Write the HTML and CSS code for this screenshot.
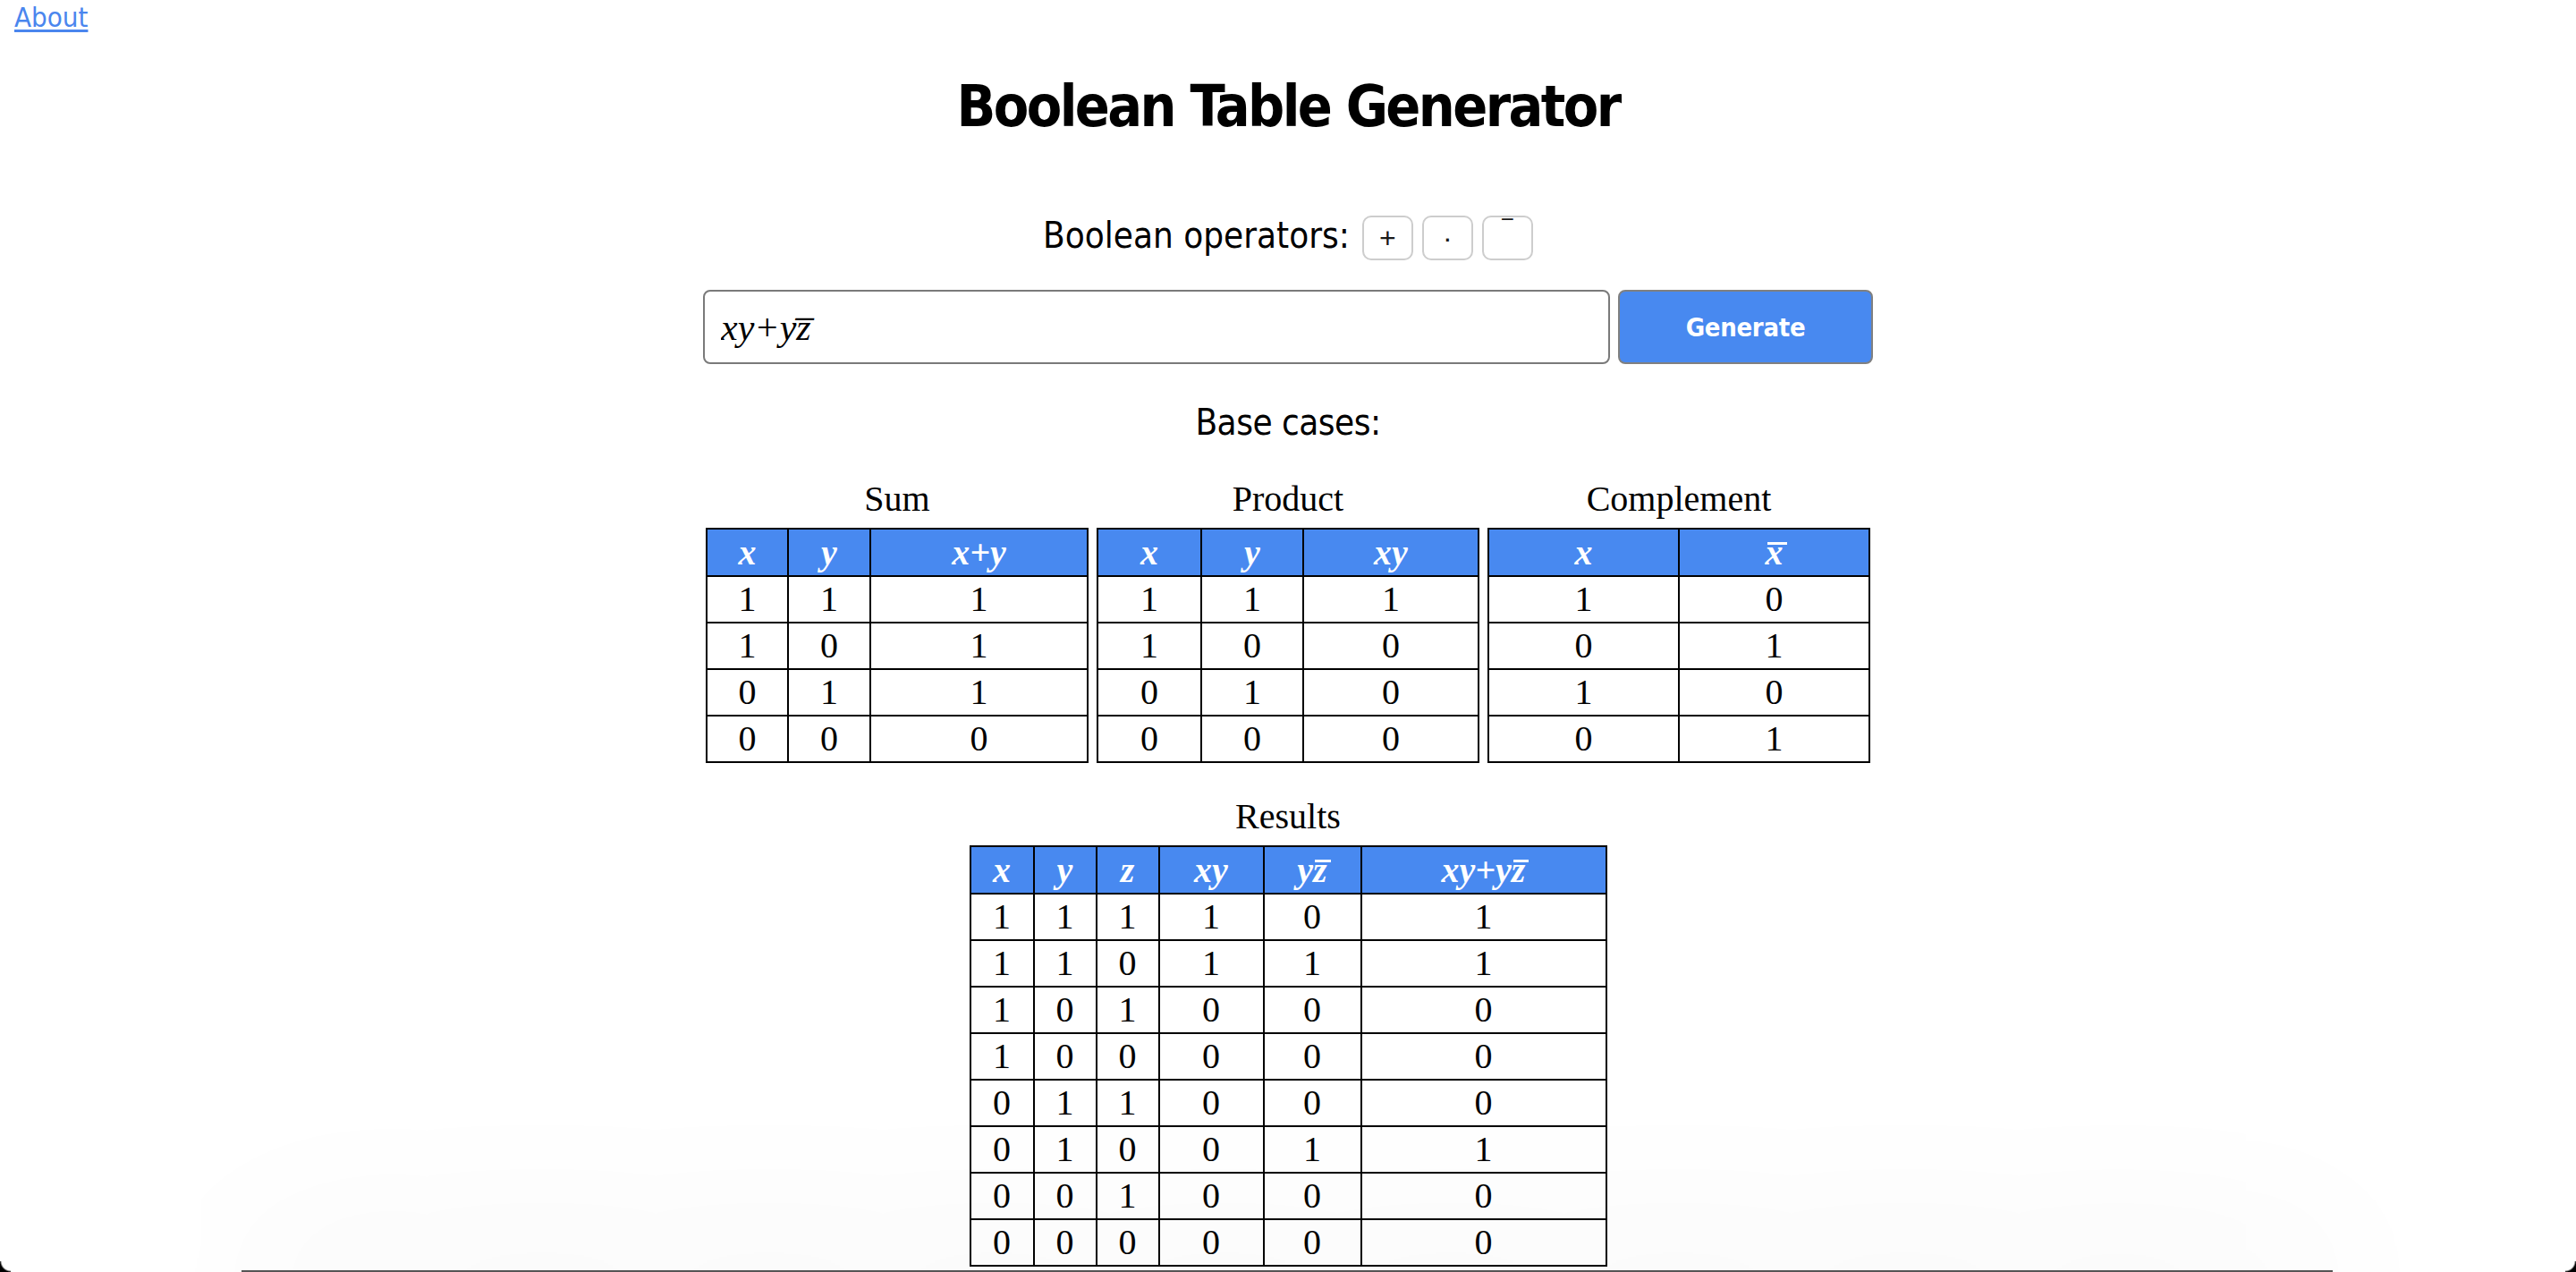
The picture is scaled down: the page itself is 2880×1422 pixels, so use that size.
FILE: index.html
```html
<!DOCTYPE html>
<html lang="en">
<head>
<meta charset="utf-8">
<title>Boolean Table Generator</title>
<link rel="stylesheet" href="styles.css">
</head>
<body>
<nav class="nav"><a class="about" href="#">About</a></nav>
<main class="main">
  <h1 class="title">Boolean Table Generator</h1>
  <div class="ops">
    <span class="ops-label">Boolean operators:</span>
    <button class="op" type="button">+</button>
    <button class="op" type="button">·</button>
    <button class="op op-bar" type="button">‾</button>
  </div>
  <form class="gen">
    <input class="expr" type="text" value="xy+yz̅">
    <button class="gen-btn" type="button">Generate</button>
  </form>
  <h2 class="subhead">Base cases:</h2>
  <div class="bases">
    <table class="tt tt-base">
      <caption>Sum</caption>
      <colgroup><col class="w91"><col class="w92"><col class="w243"></colgroup>
      <thead><tr><th>x</th><th>y</th><th>x+y</th></tr></thead>
      <tbody>
        <tr><td>1</td><td>1</td><td>1</td></tr>
        <tr><td>1</td><td>0</td><td>1</td></tr>
        <tr><td>0</td><td>1</td><td>1</td></tr>
        <tr><td>0</td><td>0</td><td>0</td></tr>
      </tbody>
    </table>
    <table class="tt tt-base">
      <caption>Product</caption>
      <colgroup><col class="w116"><col class="w114"><col class="w196"></colgroup>
      <thead><tr><th>x</th><th>y</th><th>xy</th></tr></thead>
      <tbody>
        <tr><td>1</td><td>1</td><td>1</td></tr>
        <tr><td>1</td><td>0</td><td>0</td></tr>
        <tr><td>0</td><td>1</td><td>0</td></tr>
        <tr><td>0</td><td>0</td><td>0</td></tr>
      </tbody>
    </table>
    <table class="tt tt-base">
      <caption>Complement</caption>
      <colgroup><col class="w213"><col class="w213"></colgroup>
      <thead><tr><th>x</th><th><span class="ov">x</span></th></tr></thead>
      <tbody>
        <tr><td>1</td><td>0</td></tr>
        <tr><td>0</td><td>1</td></tr>
        <tr><td>1</td><td>0</td></tr>
        <tr><td>0</td><td>1</td></tr>
      </tbody>
    </table>
  </div>
  <div class="results">
    <table class="tt tt-res">
      <caption>Results</caption>
      <colgroup><col class="w71"><col class="w70"><col class="w70"><col class="w117"><col class="w109"><col class="w274"></colgroup>
      <thead><tr><th>x</th><th>y</th><th>z</th><th>xy</th><th>y<span class="ov">z</span></th><th>xy+y<span class="ov">z</span></th></tr></thead>
      <tbody>
        <tr><td>1</td><td>1</td><td>1</td><td>1</td><td>0</td><td>1</td></tr>
        <tr><td>1</td><td>1</td><td>0</td><td>1</td><td>1</td><td>1</td></tr>
        <tr><td>1</td><td>0</td><td>1</td><td>0</td><td>0</td><td>0</td></tr>
        <tr><td>1</td><td>0</td><td>0</td><td>0</td><td>0</td><td>0</td></tr>
        <tr><td>0</td><td>1</td><td>1</td><td>0</td><td>0</td><td>0</td></tr>
        <tr><td>0</td><td>1</td><td>0</td><td>0</td><td>1</td><td>1</td></tr>
        <tr><td>0</td><td>0</td><td>1</td><td>0</td><td>0</td><td>0</td></tr>
        <tr><td>0</td><td>0</td><td>0</td><td>0</td><td>0</td><td>0</td></tr>
      </tbody>
    </table>
  </div>
</main>
<div class="dock-shadow"></div>
<div class="dock-line"></div>
<div class="corner corner-l"></div>
<div class="corner corner-r"></div>
</body>
</html>
```

FILE: styles.css
```css
html, body {
  margin: 0;
  padding: 0;
  background: #fff;
}
body {
  font-family: "DejaVu Sans Condensed", "DejaVu Sans", sans-serif;
  color: #000;
}
.nav {
  height: 38px;
  padding-left: 16px;
}
.about {
  font-size: 31px;
  line-height: 38px;
  color: #4a86ee;
  text-decoration: underline;
  text-decoration-thickness: 3px;
  text-underline-offset: 3px;
}
.title {
  margin: 44px 0 0;
  font-size: 64px;
  line-height: 74px;
  font-weight: bold;
  letter-spacing: -2.6px;
  text-align: center;
}
.ops {
  display: flex;
  justify-content: center;
  align-items: flex-start;
  margin-top: 84px;
}
.ops-label {
  font-size: 40px;
  line-height: 46px;
  margin-right: 14px;
}
.op {
  width: 57px;
  height: 50px;
  margin-top: 1px;
  margin-left: 10px;
  padding: 0;
  border: 2px solid #cdcdcd;
  border-radius: 10px;
  background: #fff;
  color: #1a1a1a;
  font-family: "Liberation Sans", sans-serif;
  font-size: 32px;
  line-height: 46px;
}
.op:first-of-type { margin-left: 0; }
.op-bar {
  line-height: 30px;
  display: flex;
  justify-content: center;
  align-items: flex-start;
}
.gen {
  display: flex;
  justify-content: center;
  gap: 9px;
  margin: 33px 0 0;
}
.expr {
  box-sizing: border-box;
  width: 1014px;
  height: 83px;
  border: 2px solid #7a7a7a;
  border-radius: 8px;
  padding: 0 18px;
  font-family: "Liberation Serif", serif;
  font-style: italic;
  font-size: 42px;
  color: #000;
  outline: none;
}
.gen-btn {
  box-sizing: border-box;
  width: 285px;
  height: 83px;
  border: 2px solid #808080;
  border-radius: 8px;
  background: #4889f0;
  color: #fff;
  font-family: "DejaVu Sans Condensed", "DejaVu Sans", sans-serif;
  font-weight: bold;
  font-size: 29px;
  letter-spacing: -0.3px;
}
.subhead {
  margin: 42px 0 0;
  font-size: 40px;
  line-height: 46px;
  font-weight: normal;
  letter-spacing: -0.5px;
  text-align: center;
}
.bases {
  display: flex;
  justify-content: center;
  align-items: flex-start;
  gap: 9px;
  margin-top: 40px;
}
.results {
  display: flex;
  justify-content: center;
  margin-top: 37px;
}
.tt {
  border-collapse: collapse;
  table-layout: fixed;
  border: 2px solid #000;
  font-family: "Liberation Serif", "Times New Roman", serif;
  font-size: 40px;
}
.tt caption {
  line-height: 46px;
  padding-bottom: 9px;
}
.tt-base { width: 424px; }
.tt-res { width: 709px; }
.tt th {
  background: #4889f0;
  color: #fff;
  font-style: italic;
  font-weight: bold;
  line-height: 51px;
  padding: 0;
  border: 2px solid #000;
  text-align: center;
}
.tt td {
  line-height: 50px;
  padding: 0;
  border: 2px solid #000;
  text-align: center;
}
.ov {
  position: relative;
  display: inline-block;
}
.ov::after {
  content: "";
  position: absolute;
  left: 2px;
  right: -4px;
  top: 14px;
  height: 3px;
  background: #fff;
}
.w91 { width: 91px; }
.w92 { width: 92px; }
.w243 { width: 243px; }
.w116 { width: 116px; }
.w114 { width: 114px; }
.w196 { width: 196px; }
.w213 { width: 213px; }
.w71 { width: 71px; }
.w70 { width: 70px; }
.w117 { width: 117px; }
.w109 { width: 109px; }
.w274 { width: 274px; }

.dock-shadow {
  position: fixed;
  left: 270px;
  right: 272px;
  bottom: -20px;
  height: 20px;
  box-shadow: 0 0 200px rgba(0, 0, 0, 0.2);
  pointer-events: none;
  z-index: 10;
}
.dock-line {
  position: fixed;
  left: 270px;
  right: 272px;
  bottom: 0;
  height: 2px;
  background: #555;
  z-index: 11;
}
.corner {
  position: fixed;
  bottom: 0;
  width: 12px;
  height: 12px;
  z-index: 12;
}
.corner-l {
  left: 0;
  background: radial-gradient(circle at 100% 0, transparent 10px, #000 12px);
}
.corner-r {
  right: 0;
  background: radial-gradient(circle at 0 0, transparent 10px, #000 12px);
}
```
